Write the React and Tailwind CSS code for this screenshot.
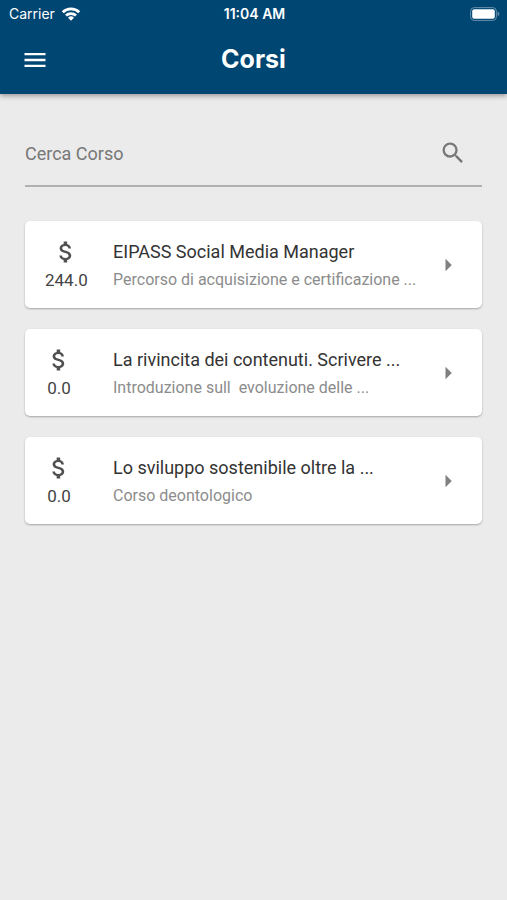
import { MdArrowRight, MdAttachMoney, MdMenu, MdSearch } from "react-icons/md";

const courses = [
  {
    price: "244.0",
    title: "EIPASS Social Media Manager",
    description: "Percorso di acquisizione e certificazione ...",
  },
  {
    price: "0.0",
    title: "La rivincita dei contenuti. Scrivere ...",
    description: "Introduzione sull  evoluzione delle ...",
  },
  {
    price: "0.0",
    title: "Lo sviluppo sostenibile oltre la ...",
    description: "Corso deontologico",
  },
];

function WifiIcon() {
  return (
    <svg viewBox="0 0 20 14" className="h-[14px] w-5" fill="none" stroke="currentColor" strokeWidth="2.8" aria-hidden="true">
      <path d="M1.8 5.2a11.8 11.8 0 0 1 16.4 0" />
      <path d="M5 8.6a7.2 7.2 0 0 1 10 0" />
      <path d="M10 13.8 7 10.8a4.3 4.3 0 0 1 6 0z" fill="currentColor" stroke="none" />
    </svg>
  );
}

function BatteryIcon() {
  return (
    <svg viewBox="0 0 30 14" className="h-[14px] w-[30px]" aria-hidden="true">
      <rect x="0.6" y="0.6" width="25.8" height="12.8" rx="3.6" fill="none" stroke="#6690ab" strokeWidth="1" />
      <rect x="2.2" y="2.2" width="22.6" height="9.6" rx="2" fill="#fff" />
      <path d="M27.6 4.6c2.4.9 2.4 3.9 0 4.8z" fill="#6690ab" />
    </svg>
  );
}

function StatusBar() {
  return (
    <div className="grid h-[27px] grid-cols-3 items-center pr-[7px] pl-[9px] text-sm">
      <div className="flex items-center gap-[6px]">
        <span>Carrier</span>
        <WifiIcon />
      </div>
      <span className="text-center font-semibold">11:04 AM</span>
      <div className="flex justify-end">
        <BatteryIcon />
      </div>
    </div>
  );
}

function CourseCard({ course }) {
  return (
    <li>
      <button
        type="button"
        className="flex w-full items-center rounded-[5px] bg-white pr-[19px] pl-5 text-left shadow-[0_1px_2px_rgba(0,0,0,0.3)]"
      >
        <span className="flex w-[68px] shrink-0 pt-[17px] pb-[14px]">
          <span className="flex flex-col items-center">
            <MdAttachMoney className="size-7 text-[#505050]" aria-hidden="true" />
            <span className="text-[17px] leading-7 text-[#444]">{course.price}</span>
          </span>
        </span>
        <span className="flex min-w-0 flex-1 flex-col pt-[17px] pb-[14px]">
          <span className="truncate text-lg leading-7 text-[#333]">{course.title}</span>
          <span className="overflow-hidden text-base leading-7 whitespace-pre text-[#8c8c8c]">{course.description}</span>
        </span>
        <MdArrowRight className="size-[30px] shrink-0 text-[#808080]" aria-hidden="true" />
      </button>
    </li>
  );
}

export default function App() {
  return (
    <div className="min-h-screen bg-[#ebebeb] font-['Roboto',sans-serif]">
      <header className="bg-[#004673] font-['Inter',sans-serif] text-white shadow-[0_2px_5px_rgba(0,0,0,0.35)]">
        <StatusBar />
        <div className="grid h-[67px] grid-cols-[28px_1fr_28px] items-center px-[21px] pb-[2px]">
          <button type="button" aria-label="Menu">
            <MdMenu className="size-7" />
          </button>
          <h1 className="text-center text-[25px] font-bold">Corsi</h1>
        </div>
      </header>
      <main className="px-[25px] pt-[26px]">
        <label className="flex h-[67px] items-center border-b-2 border-[#b0b0b0] pr-[15px]">
          <input
            type="text"
            aria-label="Cerca Corso"
            placeholder="Cerca Corso"
            className="min-w-0 flex-1 bg-transparent pt-[2px] text-lg text-[#777] outline-none placeholder:text-[#777]"
          />
          <MdSearch className="size-7 text-[#777]" aria-hidden="true" />
        </label>
        <ul className="mt-[34px] flex flex-col gap-[21px]">
          {courses.map((course) => (
            <CourseCard key={course.title} course={course} />
          ))}
        </ul>
      </main>
    </div>
  );
}
